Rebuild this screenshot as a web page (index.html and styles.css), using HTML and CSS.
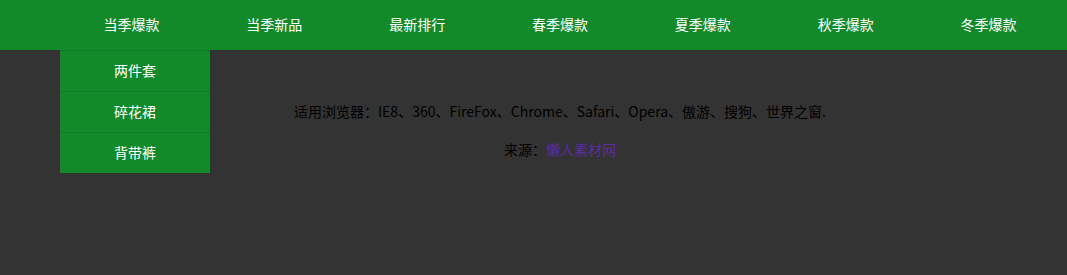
FILE: index.html
```html
<!DOCTYPE html>
<html lang="zh-CN">
<head>
    <meta charset="UTF-8">
    <meta name="viewport" content="width=device-width, initial-scale=1.0">
    <title>下拉导航菜单</title>
    <link rel="stylesheet" href="styles.css">
</head>
<body>
    <div class="header">
        <ul class="nav">
            <li class="nav-item">
                <a href="#">当季爆款</a>
                <ul class="sub-nav">
                    <li><a href="#">两件套</a></li>
                    <li><a href="#">碎花裙</a></li>
                    <li><a href="#">背带裤</a></li>
                </ul>
            </li>
            <li class="nav-item"><a href="#">当季新品</a></li>
            <li class="nav-item"><a href="#">最新排行</a></li>
            <li class="nav-item"><a href="#">春季爆款</a></li>
            <li class="nav-item"><a href="#">夏季爆款</a></li>
            <li class="nav-item"><a href="#">秋季爆款</a></li>
            <li class="nav-item"><a href="#">冬季爆款</a></li>
        </ul>
    </div>
    <div class="content">
        <p>适用浏览器：IE8、360、FireFox、Chrome、Safari、Opera、傲游、搜狗、世界之窗.</p>
        <p>来源：<a href="#">懒人素材网</a></p>
    </div>
</body>
</html>
```

FILE: styles.css
```css
:root {
    --green: #128a2a;
    --green-line: #0f7c24;
    --background-color: #333333;
}

* {
    margin: 0;
    padding: 0;
    box-sizing: border-box;
}

body {
    font-family: "Noto Sans CJK SC", "Microsoft YaHei", sans-serif;
    font-size: 14px;
    background-color: var(--background-color);
    color: #000;
}

a {
    text-decoration: none;
}

ul {
    list-style: none;
}

.header {
    background-color: var(--green);
    height: 50px;
}

.nav {
    display: flex;
    width: 1000px;
    margin-left: 60px;
}

.nav-item {
    position: relative;
    width: 142.86px;
    height: 50px;
    text-align: center;
    line-height: 48px;
}

.nav-item a {
    color: #fff;
    display: block;
}

.sub-nav {
    position: absolute;
    top: 50px;
    left: 0;
    width: 150px;
    background-color: var(--green);
    z-index: 10;
}

.sub-nav li {
    border-top: 1px solid var(--green-line);
    height: 41px;
    line-height: 38px;
}

.content {
    width: 1000px;
    margin-left: 60px;
    padding-top: 35px;
    text-align: center;
}

.content p {
    margin: 14px 0;
    line-height: 24px;
}

.content a {
    color: #5a2ca6;
}
```
